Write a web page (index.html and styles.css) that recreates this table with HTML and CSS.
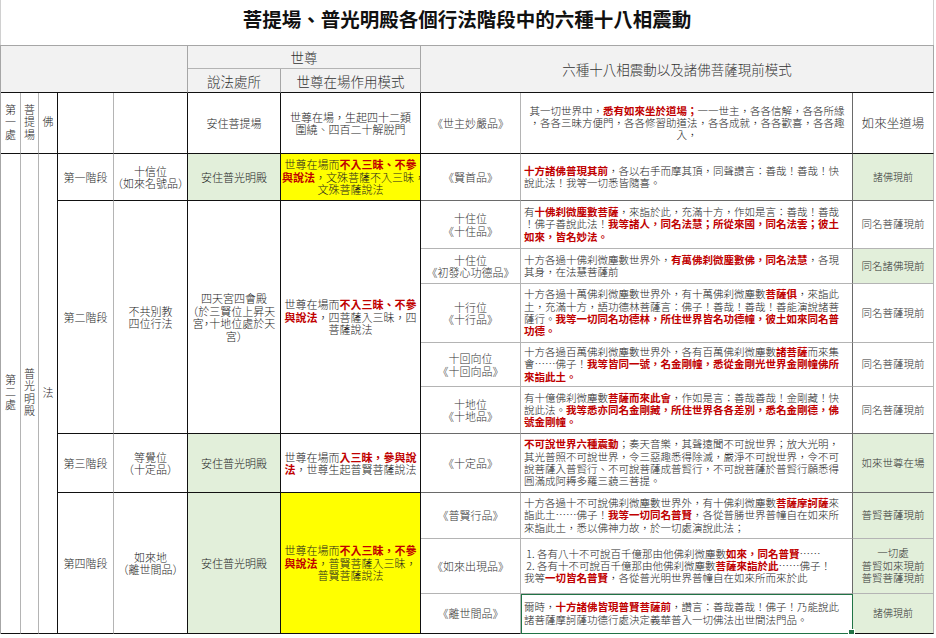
FILE: index.html
```html
<!DOCTYPE html>
<html lang="zh-Hant">
<head>
<meta charset="utf-8">
<title>六種十八相震動</title>
<link rel="stylesheet" href="styles.css">
</head>
<body>
<div class="title">菩提場、普光明殿各個行法階段中的六種十八相震動</div>
<table class="grid">
<colgroup>
<col class="c1"><col class="c2"><col class="c3"><col class="c4"><col class="c5"><col class="c6"><col class="c7"><col class="c8"><col class="c9"><col class="c10">
</colgroup>
<tr class="h1">
<td class="head hk" colspan="5" rowspan="2"></td>
<td class="head" colspan="2">世尊</td>
<td class="head hk" colspan="3" rowspan="2">六種十八相震動以及諸佛菩薩現前模式</td>
</tr>
<tr class="h2">
<td class="head hk">說法處所</td>
<td class="head hk">世尊在場作用模式</td>
</tr>

<tr class="r1">
<td class="hk"><span class="vt">第一處</span></td>
<td class="hk"><span class="vt">菩提場</span></td>
<td class="hk vk"><span class="vt">佛</span></td>
<td class="hk"></td>
<td class="hk vk"></td>
<td class="hk vk place lg">安住菩提場</td>
<td class="hk vk mode">世尊在場，生起四十二類<br>圍繞、四百二十解脫門</td>
<td class="hk sutra">《世主妙嚴品》</td>
<td class="hk vd text center">其一切世界中，<span class="r">悉有如來坐於道場；</span>一一世主，各各信解，各各所緣<br>，各各三昧方便門，各各修習助道法，各各成就，各各歡喜，各各趣<br>入，</td>
<td class="hk res xl">如來坐道場</td>
</tr>

<tr class="r2">
<td class="hk" rowspan="10"><span class="vt">第二處</span></td>
<td class="hk" rowspan="10"><span class="vt">普光明殿</span></td>
<td class="hk vk" rowspan="10"><span class="vt">法</span></td>
<td class="hk">第一階段</td>
<td class="hk vk half">十信位<br>（如來名號品）</td>
<td class="hk vk place green">安住普光明殿</td>
<td class="hk vk mode yellow">世尊在場而<span class="r">不入三昧、不參<br>與說法</span>，文殊菩薩不入三昧，<br>文殊菩薩說法</td>
<td class="hg sutra">《賢首品》</td>
<td class="hg vd text"><span class="r">十方諸佛普現其前</span>，各以右手而摩其頂，同聲讚言：善哉！善哉！快<br>說此法！我等一切悉皆隨喜。</td>
<td class="hg res green sm">諸佛現前</td>
</tr>

<tr class="r3">
<td class="hk" rowspan="5">第二階段</td>
<td class="hk vk" rowspan="5">不共別教<br>四位行法</td>
<td class="hk vk place half" rowspan="5">四天宮四會殿<br>（於三賢位上昇天<br>宮，十地位處於天<br>宮）</td>
<td class="hk vk mode" rowspan="5">世尊在場而<span class="r">不入三昧、不參<br>與說法</span>，四菩薩入三昧，四<br>菩薩說法</td>
<td class="sutra">十住位<br>《十住品》</td>
<td class="vd text">有<span class="r">十佛刹微塵數菩薩</span>，來詣於此，充滿十方，作如是言：善哉！善哉<br>！佛子善說此法！<span class="r">我等諸人，同名法慧；所從來國，同名法雲；彼土<br>如來，皆名妙法。</span></td>
<td class="res">同名菩薩現前</td>
</tr>

<tr class="r4">
<td class="sutra">十住位<br>《初發心功德品》</td>
<td class="vd text">十方各過十佛刹微塵數世界外，<span class="r">有萬佛刹微塵數佛，同名法慧</span>，各現<br>其身，在法慧菩薩前</td>
<td class="res green">同名諸佛現前</td>
</tr>

<tr class="r5">
<td class="sutra">十行位<br>《十行品》</td>
<td class="vd text">十方各過十萬佛刹微塵數世界外，有十萬佛刹微塵數<span class="r">菩薩俱</span>，來詣此<br>土，充滿十方，語功德林菩薩言：佛子！善哉！善哉！善能演說諸菩<br>薩行。<span class="r">我等一切同名功德林，所住世界皆名功德幢，彼土如來同名普<br>功德。</span></td>
<td class="res">同名菩薩現前</td>
</tr>

<tr class="r6">
<td class="sutra">十回向位<br>《十回向品》</td>
<td class="vd text">十方各過百萬佛刹微塵數世界外，各有百萬佛刹微塵數<span class="r">諸菩薩</span>而來集<br>會……佛子！<span class="r">我等皆同一號，名金剛幢，悉從金剛光世界金剛幢佛所<br>來詣此土。</span></td>
<td class="res">同名菩薩現前</td>
</tr>

<tr class="r7">
<td class="hg sutra">十地位<br>《十地品》</td>
<td class="hg vd text">有十億佛刹微塵數<span class="r">菩薩而來此會</span>，作如是言：善哉善哉！金剛藏！快<br>說此法。<span class="r">我等悉亦同名金剛藏，所住世界各各差別，悉名金剛德，佛<br>號金剛幢。</span></td>
<td class="hg res">同名菩薩現前</td>
</tr>

<tr class="r8">
<td class="hk">第三階段</td>
<td class="hk vk half">等覺位<br>（十定品）</td>
<td class="hk vk place green">安住普光明殿</td>
<td class="hk vk mode">世尊在場而<span class="r">入三昧，參與說<br>法</span>，世尊生起普賢菩薩說法</td>
<td class="hg sutra">《十定品》</td>
<td class="hg vd text"><span class="r">不可說世界六種震動</span>；奏天音樂，其聲遠聞不可說世界；放大光明，<br>其光普照不可說世界，令三惡趣悉得除滅，嚴淨不可說世界，令不可<br>說菩薩入普賢行、不可說菩薩成普賢行，不可說菩薩於普賢行願悉得<br>圓滿成阿耨多羅三藐三菩提。</td>
<td class="hg res green">如來世尊在場</td>
</tr>

<tr class="r9">
<td class="hk" rowspan="3">第四階段</td>
<td class="hk vk half" rowspan="3">如來地<br>（離世間品）</td>
<td class="hk vk place green" rowspan="3">安住普光明殿</td>
<td class="hk vk mode yellow" rowspan="3">世尊在場而<span class="r">不入三昧，不參<br>與說法</span>，普賢菩薩入三昧，<br>普賢菩薩說法</td>
<td class="sutra">《普賢行品》</td>
<td class="vd text">十方各過十不可說佛刹微塵數世界外，有十佛刹微塵數<span class="r">菩薩摩訶薩</span>來<br>詣此土……佛子！<span class="r">我等一切同名普賢</span>，各從普勝世界普幢自在如來所<br>來詣此土，悉以佛神力故，於一切處演說此法；</td>
<td class="res green">普賢菩薩現前</td>
</tr>

<tr class="r10">
<td class="sutra">《如來出現品》</td>
<td class="vd text">&nbsp;1. 各有八十不可說百千億那由他佛刹微塵數<span class="r">如來，同名普賢</span>……<br>&nbsp;2. 各有十不可說百千億那由他佛刹微塵數<span class="r">菩薩來詣於此</span>……佛子！<br>我等<span class="r">一切皆名普賢</span>，各從普光明世界普幢自在如來所而來於此</td>
<td class="res green">一切處<br>普賢如來現前<br>普賢菩薩現前</td>
</tr>

<tr class="r11">
<td class="hk sutra">《離世間品》</td>
<td class="hk vd text picked">爾時，<span class="r">十方諸佛皆現普賢菩薩前</span>，讚言：善哉善哉！佛子！乃能說此<br>諸菩薩摩訶薩功德行處決定義華普入一切佛法出世間法門品。</td>
<td class="hk res green sm">諸佛現前</td>
</tr>
</table>
</body>
</html>
```

FILE: styles.css
```css
* {
  box-sizing: border-box;
}

body {
  margin: 0;
  background: #ffffff;
  font-family: "Noto Sans CJK TC", "Noto Sans CJK SC", sans-serif;
  font-weight: 300;
  color: #1e1e1e;
}

.title {
  width: 934px;
  height: 45px;
  line-height: 38px;
  text-align: center;
  font-size: 19.5px;
  font-weight: 700;
  color: #111111;
  border-left: 1px solid #d0d0d0;
  border-right: 1px solid #d0d0d0;
}

.grid {
  border-collapse: separate;
  border-spacing: 0;
  table-layout: fixed;
  width: 934px;
  border-top: 1px solid #a6a6a6;
  border-left: 1px solid #a6a6a6;
}

.c1 { width: 20px; }
.c2 { width: 18px; }
.c3 { width: 19px; }
.c4 { width: 56px; }
.c5 { width: 74px; }
.c6 { width: 93px; }
.c7 { width: 140px; }
.c8 { width: 100px; }
.c9 { width: 332px; }
.c10 { width: 81px; }

.h1 { height: 23px; }
.h2 { height: 24px; }
.r1 { height: 61px; }
.r2 { height: 47px; }
.r3 { height: 48px; }
.r4 { height: 35px; }
.r5 { height: 59px; }
.r6 { height: 44px; }
.r7 { height: 47px; }
.r8 { height: 59px; }
.r9 { height: 46px; }
.r10 { height: 55px; }
.r11 { height: 40px; }

.grid td {
  border-right: 1px solid #b4b4b4;
  border-bottom: 1px solid #b4b4b4;
  padding: 0 1px;
  text-align: center;
  vertical-align: middle;
  font-size: 11px;
  line-height: 12.5px;
  white-space: nowrap;
  overflow: visible;
}

.grid td.head {
  background: #f2f2f2;
  font-size: 13.5px;
  line-height: 16px;
  color: #333333;
  border-right-color: #a6a6a6;
}

.grid td.hk { border-bottom-color: #111111; }
.grid td.hg { border-bottom-color: #6a6a6a; }
.grid td.vk { border-right-color: #111111; }
.grid td.vd { border-right-color: #6a6a6a; }

.vt {
  display: inline-block;
  writing-mode: vertical-rl;
  letter-spacing: 1.5px;
  line-height: 12px;
  font-size: 11px;
}

.half {
  font-feature-settings: "halt";
}

.place {
  font-size: 10.8px;
}

.lg {
  font-size: 11.5px;
}

.mode {
  font-size: 10.5px;
}

.grid td.sutra {
  color: #333333;
  font-feature-settings: "halt";
}

.grid td.text {
  text-align: left;
  font-size: 10.5px;
  line-height: 12.3px;
  padding: 0 2px 0 3px;
}

.grid td.center {
  text-align: center;
}

.grid td.res {
  font-size: 10.5px;
  color: #333333;
}

.grid td.xl {
  font-size: 12.5px;
}

.grid td.sm {
  font-size: 10px;
}

.green {
  background: #e2efda;
}

.yellow {
  background: #ffff00;
}

.r {
  color: #c00000;
  font-weight: 700;
}

.grid td.picked {
  position: relative;
  border-right-color: #217346;
  border-bottom-color: #217346;
  box-shadow: inset 1px 1px 0 #217346;
}

.grid td.picked::after {
  content: "";
  position: absolute;
  right: -3px;
  bottom: -3px;
  width: 5px;
  height: 5px;
  background: #217346;
  border: 1px solid #ffffff;
}
```
